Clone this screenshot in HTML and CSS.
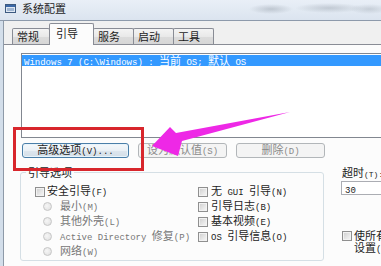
FILE: index.html
```html
<!DOCTYPE html>
<html lang="zh-CN">
<head>
<meta charset="utf-8">
<title>系统配置</title>
<link rel="stylesheet" href="styles.css">
</head>
<body>
<div class="titlebar">
  <svg class="appicon" width="11" height="9" viewBox="0 0 11 9">
    <rect x="0.5" y="0.5" width="10" height="8" fill="#dfe8f3" stroke="#3d5a80"/>
    <rect x="1" y="1" width="9" height="2" fill="#3a68a8"/>
    <rect x="2" y="4" width="7" height="3" fill="#9fb6d3"/>
  </svg>
  <span class="title">系统配置</span>
  <div class="glass"></div>
</div>
<div class="frame">
  <div class="client">
    <div class="tabs">
      <div class="tab">常规</div>
      <div class="tab active">引导</div>
      <div class="tab">服务</div>
      <div class="tab">启动</div>
      <div class="tab">工具</div>
    </div>
    <div class="panel">
      <div class="list">
        <div class="row sel"><span class="m">Windows 7 (C:\Windows) : </span>当前<span class="m"> OS; </span>默认<span class="m"> OS</span></div>
      </div>
      <div class="btns">
        <div class="btn default"><span class="lbl">高级选项<span class="m">(V)...</span></span></div>
        <div class="btn disabled"><span class="lbl">设为默认值<span class="m">(S)</span></span></div>
        <div class="btn disabled"><span class="lbl">删除<span class="m">(D)</span></span></div>
      </div>
      <div class="opts">
        <fieldset class="group">
          <legend>引导选项</legend>
          <div class="cols">
            <div class="col col-left">
              <div class="item"><span class="cb"></span><span class="lbl">安全引导<span class="m">(F)</span></span></div>
              <div class="item off"><span class="radio"></span><span class="lbl">最小<span class="m">(M)</span></span></div>
              <div class="item off"><span class="radio"></span><span class="lbl">其他外壳<span class="m">(L)</span></span></div>
              <div class="item off"><span class="radio"></span><span class="lbl"><span class="m">Active Directory </span>修复<span class="m">(P)</span></span></div>
              <div class="item off"><span class="radio"></span><span class="lbl">网络<span class="m">(W)</span></span></div>
            </div>
            <div class="col col-right">
              <div class="item"><span class="cb"></span><span class="lbl">无<span class="m"> GUI </span>引导<span class="m">(N)</span></span></div>
              <div class="item"><span class="cb"></span><span class="lbl">引导日志<span class="m">(B)</span></span></div>
              <div class="item"><span class="cb"></span><span class="lbl">基本视频<span class="m">(E)</span></span></div>
              <div class="item"><span class="cb"></span><span class="lbl"><span class="m">OS </span>引导信息<span class="m">(O)</span></span></div>
            </div>
          </div>
        </fieldset>
        <div class="side">
          <div class="timeout-label">超时<span class="m">(T):</span></div>
          <div class="input"><span class="m">30</span></div>
          <div class="perm">
            <span class="cb"></span>
            <span class="perm-text">使所有引导设置成为永久设置<span class="m">(K)</span></span>
          </div>
        </div>
      </div>
    </div>
  </div>
</div>
<div class="redbox"></div>
<svg class="arrow" width="381" height="266" viewBox="0 0 381 266">
  <polygon points="152,146 170,127 176,133 290,112 182,141 178,156" fill="#ee28e6"/>
</svg>
</body>
</html>
```
FILE: styles.css
```css
html, body {
  margin: 0;
  padding: 0;
}
body {
  width: 381px;
  height: 266px;
  overflow: hidden;
  position: relative;
  font-family: "Noto Sans CJK SC", sans-serif;
  font-size: 11px;
  line-height: 12px;
  color: #1c1c1c;
  background: #d3deea;
}
.m {
  font-family: "Liberation Mono", "DejaVu Sans Mono", monospace;
  font-size: 9px;
}
.lbl {
  white-space: pre;
}
.titlebar {
  position: relative;
  box-sizing: border-box;
  height: 20px;
  padding: 0 0 4px 5px;
  display: flex;
  align-items: center;
  background: linear-gradient(#e9eff7, #dbe4ef);
}
.appicon {
  flex: none;
  margin-right: 6px;
}
.title {
  color: #1e1e1e;
}
.glass {
  position: absolute;
  right: 0;
  top: 0;
  width: 140px;
  height: 18px;
  background:
    radial-gradient(ellipse 22px 5px at 30px 9px, rgba(95,105,118,0.28), transparent),
    radial-gradient(ellipse 34px 5px at 88px 8px, rgba(95,105,118,0.26), transparent),
    radial-gradient(ellipse 20px 5px at 128px 9px, rgba(95,105,118,0.22), transparent);
}
.frame {
  display: flex;
  height: 246px;
  padding-left: 3px;
  border-top: 1px solid #8d9aab;
  background: #d3deea;
}
.client {
  flex: 1;
  display: flex;
  flex-direction: column;
  border-left: 1px solid #8e9aa8;
  background: #f0f0f0;
}
.tabs {
  height: 23px;
  display: flex;
  align-items: flex-end;
  padding-left: 8px;
}
.tab {
  box-sizing: border-box;
  width: 41px;
  height: 16px;
  margin-left: -1px;
  padding-left: 4px;
  line-height: 14px;
  border: 1px solid #898c95;
  border-bottom: none;
  border-radius: 2px 2px 0 0;
  background: linear-gradient(#f4f4f4, #e9e9e9 50%, #dcdcdc 51%, #d6d6d6);
  white-space: nowrap;
}
.tab:first-child {
  margin-left: 0;
  width: 38px;
}
.tab.active {
  position: relative;
  z-index: 1;
  width: 45px;
  height: 22px;
  margin-bottom: -1px;
  padding-left: 6px;
  line-height: 18px;
  background: #fcfcfc;
}
.panel {
  flex: 1;
  border-top: 1px solid #898c95;
  background: #fcfcfc;
  padding: 8px 0 0 16px;
}
.list {
  box-sizing: border-box;
  width: 400px;
  height: 85px;
  margin-left: 1px;
  padding-top: 1px;
  border: 1px solid #828790;
  border-right: none;
  background: #fff;
}
.row {
  height: 11px;
  line-height: 11px;
  padding-left: 2px;
  white-space: pre;
}
.row.sel {
  background: #3399ff;
  color: #fff;
}
.btns {
  display: flex;
  gap: 9px;
  margin: 5px 0 0 2px;
}
.btn {
  box-sizing: border-box;
  height: 15px;
  display: flex;
  align-items: center;
  justify-content: center;
  line-height: 13px;
  border: 1px solid #707070;
  border-radius: 3px;
}
.btn.default {
  width: 107px;
  border-color: #4a7ea8;
  background: linear-gradient(#f5f8fb, #eaf0f5 50%, #dde6ee 51%, #d4dee7);
  box-shadow: inset 0 0 0 1px #e8f4fb;
}
.btn.disabled {
  width: 89px;
  border-color: #b2b6b9;
  background: #f4f4f4;
  color: #8a8a8a;
}
.opts {
  display: flex;
  margin-top: 8px;
}
.group {
  box-sizing: border-box;
  width: 304px;
  height: 95px;
  min-width: 0;
  margin: 0;
  padding: 0;
  border: 1px solid #d5dfe5;
  border-radius: 3px;
  flex: none;
}
.group legend {
  margin-left: 5px;
  padding: 0 2px;
  line-height: 12px;
}
.cols {
  display: flex;
  padding: 6px 0 0 14px;
}
.col {
  display: flex;
  flex-direction: column;
}
.col-left {
  width: 163px;
}
.item {
  height: 15px;
  display: flex;
  align-items: center;
}
.item.off {
  color: #777;
}
.cb {
  flex: none;
  box-sizing: border-box;
  width: 10px;
  height: 10px;
  margin-right: 2px;
  border: 1px solid #8f8f8f;
  background: linear-gradient(135deg, #cdcdcd, #ececec 70%, #f6f6f6);
  box-shadow: inset 0 0 0 1px #f2f2f2;
}
.col-right .cb {
  margin-right: 3px;
}
.radio {
  flex: none;
  box-sizing: border-box;
  width: 9px;
  height: 9px;
  margin: 0 8px;
  border-radius: 50%;
  border: 1px solid #c6c6c6;
  background: radial-gradient(circle at 40% 40%, #f6f6f6, #dedede);
}
.side {
  flex: none;
  width: 140px;
  margin-left: 17px;
}
.timeout-label {
  line-height: 12px;
  padding-left: 1px;
  white-space: nowrap;
}
.timeout-label .m {
  font-size: 8px;
}
.input {
  box-sizing: border-box;
  width: 60px;
  height: 14px;
  line-height: 12px;
  padding-left: 3px;
  border: 1px solid #abadb3;
  border-right: none;
  background: #fff;
}
.perm {
  display: flex;
  align-items: flex-start;
  margin: 34px 0 0 1px;
}
.perm .cb {
  margin-top: 2px;
  margin-right: 2px;
}
.perm-text {
  width: 125px;
  line-height: 12px;
}
.redbox {
  position: absolute;
  left: 13px;
  top: 127px;
  box-sizing: border-box;
  width: 131px;
  height: 44px;
  border: 3px solid #d8262c;
}
.arrow {
  position: absolute;
  left: 0;
  top: 0;
  pointer-events: none;
}
```
